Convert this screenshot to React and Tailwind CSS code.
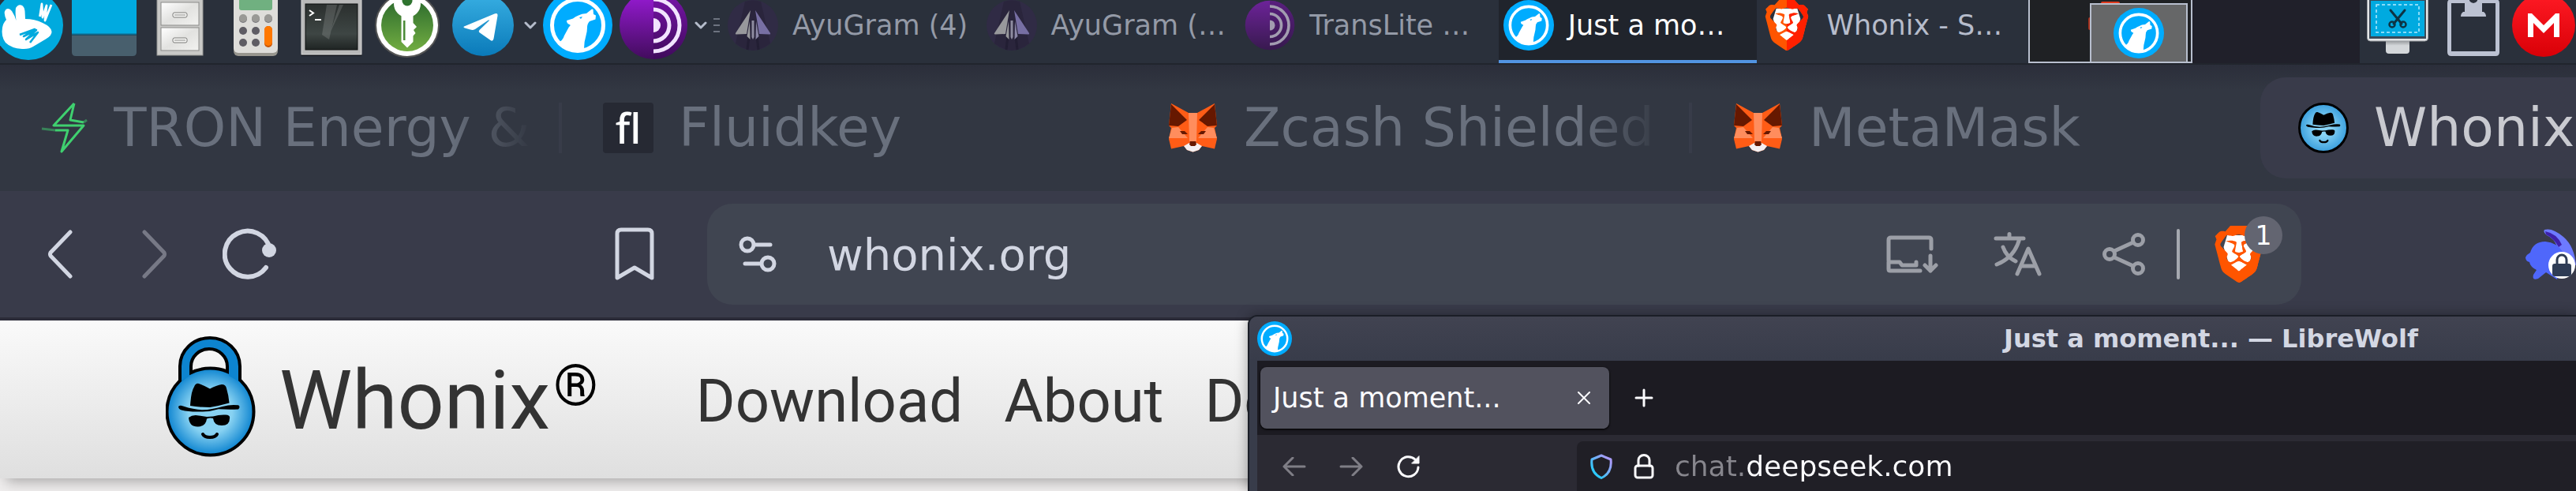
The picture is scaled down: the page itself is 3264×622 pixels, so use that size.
import { SiBrave } from "react-icons/si";

/* ---------- Logos ---------- */

const WolfLogo = ({ className }) => (
  <svg viewBox="0 0 88 88" className={className} aria-hidden="true">
    <circle cx="44" cy="44" r="44" fill="#00acff" />
    <circle cx="44" cy="44" r="32.5" fill="none" stroke="#fff" strokeWidth="5" />
    <path
      d="M30 38 L38 35.5 Q41 33 45 31.5 Q49 29 55 29 L62 23.5 L63.5 24 L64 30 L67 31.5 L66.5 36.5 L59 39 Q56 42 56 47 Q56 52 54.5 57 Q52 65 52 73.5 L50 76 H38 Q25 74 19 65.5 Q25 64 27 57 L33 46 Q36 43.5 33.5 43 Q30 42 30 38 Z"
      fill="#fff"
    />
    <path d="M46 34 L50 33 L48 36 Z" fill="#00acff" />
  </svg>
);

const BraveLogo = ({ className, left = "#ff5500", right = "#ff2000" }) => (
  <svg viewBox="0 0 20 24" className={className} aria-hidden="true">
    <path d="M5 4 H15 L16.5 9 L14 17 L10 20 L6 17 L3.5 9 Z" fill="#fff" />
    <SiBrave x="-2" y="0" size="24" color={left} />
    <SiBrave x="-2" y="0" size="24" color={right} style={{ clipPath: "inset(0 0 0 50%)" }} />
  </svg>
);

const TorLogo = ({ className }) => (
  <svg viewBox="0 0 88 88" className={className} aria-hidden="true">
    <defs>
      <linearGradient id="tor-fill" x1="0" y1="0" x2="0" y2="1">
        <stop offset="0" stopColor="#9a1bd8" />
        <stop offset="1" stopColor="#420c5d" />
      </linearGradient>
    </defs>
    <circle cx="44" cy="44" r="43" fill="url(#tor-fill)" />
    <path d="M44 1 a43 43 0 0 1 0 86 Z" fill="#3d0a58" fillOpacity="0.35" />
    <path d="M44 35 a9 9 0 0 1 0 18 Z" fill="#f2e4ff" />
    <path d="M44 24 a20 20 0 0 1 0 40 M44 11 a33 33 0 0 1 0 66" fill="none" stroke="#f2e4ff" strokeWidth="5" />
  </svg>
);

const AyuLogo = ({ className }) => (
  <svg viewBox="0 0 64 64" className={className} aria-hidden="true">
    <circle cx="32" cy="32" r="32" fill="#302b45" />
    <path d="M22 2 L10 55 Q20 63 32 64 Q44 63 54 55 L42 2 Q32 -1 22 2 Z" fill="#2a253c" />
    <path d="M27 45 L25 63 M37 45 L39 63" stroke="#221e33" strokeWidth="3" />
    <path d="M29 13 L10 42 Q9 44 12 43.5 L24 43 Z" fill="#98989c" />
    <path d="M35 13 L54 42 Q55 44 52 43.5 L40 43 Z" fill="#776fa3" />
    <path d="M28 27 L24.5 46 L28.5 50 Z" fill="#98989c" />
    <path d="M30.5 26 L30.5 47 L32 50 L33.5 47 L33.5 26 Z" fill="#8e8ca0" />
    <path d="M36 27 L39.5 46 L35.5 50 Z" fill="#8a86a6" />
  </svg>
);

const RabbitLogo = () => (
  <svg viewBox="0 0 88 88" className="size-[88px]" aria-hidden="true">
    <circle cx="44" cy="44" r="44" fill="#00aade" />
    <path
      d="M16 37 Q12 28 15 24.5 Q19 21 23 26 Q27 32 28.5 38 Q27 28 28 22 Q31 17 35 18.5 Q39 20 39.5 26 L40 36 Q52 36 62 41 Q73 46 73.5 52 Q74 57 66 61.5 L50 71 Q45 74.5 36 74 Q22 73 15 66 Q9 58 11 47 Q12 41 16 37 Z"
      fill="#fff"
    />
    <path
      d="M58.5 33 L61 17 L62 34 L67 19 L65 38 L73 18"
      fill="none"
      stroke="#fff"
      strokeWidth="2.8"
      strokeLinejoin="round"
    />
    <path
      d="M33 56 L52 49 L38 58 L54 50 L41 62 L56 53 L46 66"
      fill="none"
      stroke="#00aade"
      strokeWidth="2.6"
      strokeLinejoin="round"
    />
  </svg>
);

const DesktopIcon = () => (
  <svg viewBox="0 0 82 96" className="h-24 w-[82px]" aria-hidden="true">
    <rect x="0" y="16" width="82" height="43" fill="#00aae0" />
    <path d="M0 61 H82 V82 Q82 87 77 87 H5 Q0 87 0 82 Z" fill="#485f6d" />
    <path d="M0 59.5 H82" stroke="#116a8c" strokeWidth="2" />
  </svg>
);

const CabinetIcon = () => (
  <svg viewBox="0 0 60 96" className="h-24 w-[60px]" aria-hidden="true">
    <defs>
      <linearGradient id="drawer" x1="0" y1="0" x2="1" y2="1">
        <stop offset="0" stopColor="#fff" />
        <stop offset="0.5" stopColor="#e2e2e0" />
        <stop offset="1" stopColor="#f2f2f0" />
      </linearGradient>
    </defs>
    <rect x="1" y="0" width="58" height="86" fill="#c9c9c7" stroke="#989896" />
    {[19, 51].map((y) => (
      <g key={y}>
        <rect x="6" y={y} width="48" height="29" fill="url(#drawer)" stroke="#8b8b89" />
        <rect x="21" y={y + 13} width="18" height="6" rx="2" fill="#f6f6f4" stroke="#7c7c7a" />
        <path d={`M23 ${y + 16} H37`} stroke="#8b8b89" />
      </g>
    ))}
  </svg>
);

const CalculatorIcon = () => (
  <svg viewBox="0 0 56 96" className="h-24 w-14" aria-hidden="true">
    <rect x="0" y="0" width="56" height="87" rx="6" fill="#98968f" />
    <rect x="0" y="0" width="56" height="83" rx="6" fill="#deddda" />
    <rect x="7" y="8" width="42" height="21" rx="3" fill="#70b080" />
    {[12, 28, 44].map((x) => (
      <g key={x}>
        <circle cx={x} cy="40" r="5" fill="#77767b" />
        <circle cx={x} cy="39" r="5" fill="#9a9996" />
      </g>
    ))}
    {[55, 70].map((y) => (
      <g key={y}>
        <circle cx="12" cy={y} r="5" fill="#5e5c64" />
        <circle cx="28" cy={y} r="5" fill="#5e5c64" />
      </g>
    ))}
    <rect x="39" y="49" width="10" height="27" rx="5" fill="#c75300" />
    <rect x="39" y="49" width="10" height="25" rx="5" fill="#ff7800" />
  </svg>
);

const TerminalIcon = () => (
  <svg viewBox="0 0 78 96" className="h-24 w-[78px]" aria-hidden="true">
    <defs>
      <linearGradient id="term-screen" x1="0" y1="0" x2="0" y2="1">
        <stop offset="0" stopColor="#2b2f2e" />
        <stop offset="0.65" stopColor="#3e4644" />
        <stop offset="1" stopColor="#1f2423" />
      </linearGradient>
    </defs>
    <rect x="0" y="83" width="78" height="4" rx="2" fill="#12151b" />
    <rect x="1" y="8" width="76" height="77" fill="#b9b9b9" stroke="#dadada" />
    <rect x="6" y="21" width="66" height="58" fill="url(#term-screen)" stroke="#0f1111" />
    <path d="M33 22 H46 L36 66 L27 60 Z M54 22 L38 56 L41 46 L49 22 Z" fill="#fff" fillOpacity="0.14" />
    <path d="M11 29 L16 32.5 L11 36" fill="none" stroke="#fff" strokeWidth="2" />
    <path d="M18 41 H26" stroke="#fff" strokeWidth="2" />
  </svg>
);

const KeyIcon = () => (
  <svg viewBox="0 0 82 82" className="size-[82px]" aria-hidden="true">
    <defs>
      <linearGradient id="key-fill" x1="0" y1="0" x2="0" y2="1">
        <stop offset="0" stopColor="#2c6b2d" />
        <stop offset="1" stopColor="#72ad42" />
      </linearGradient>
    </defs>
    <circle cx="41" cy="41" r="41" fill="#545454" />
    <circle cx="41" cy="41" r="39" fill="#fff" />
    <circle cx="41" cy="41" r="33" fill="url(#key-fill)" />
    <circle cx="41" cy="14" r="17" fill="#fff" />
    <circle cx="41" cy="10" r="6.5" fill="#2f742f" />
    <path d="M33.5 29 H48.5 V38 L53 43 L49 47 L51.5 51 L48.5 54.5 V62 L41 69.5 L33.5 62 Z" fill="#fff" />
    <rect x="36" y="35" width="2.5" height="25" fill="#4b8b37" />
  </svg>
);

const TelegramIcon = () => (
  <svg viewBox="0 0 78 78" className="size-[78px]" aria-hidden="true">
    <defs>
      <linearGradient id="tg-fill" x1="0" y1="0" x2="0" y2="1">
        <stop offset="0" stopColor="#37aee2" />
        <stop offset="1" stopColor="#0a7ab9" />
      </linearGradient>
    </defs>
    <circle cx="39" cy="39" r="39" fill="url(#tg-fill)" />
    <path
      d="M15 40.5 L53.5 24.5 Q58 23 57.5 27 L52.5 56 Q51.5 60 48.5 58 L35 48.5 Q32.5 47 35 44.5 L46.5 33.5 Q48 31.5 45 33 L29 44 Q26 45.5 23 44.5 L16 42.5 Q13.5 41.5 15 40.5 Z"
      fill="#fff"
    />
  </svg>
);

const MonitorCutIcon = () => (
  <svg viewBox="0 0 78 96" className="h-24 w-[78px]" aria-hidden="true">
    <defs>
      <linearGradient id="stand" x1="0" y1="0" x2="0" y2="1">
        <stop offset="0" stopColor="#8f9295" />
        <stop offset="0.4" stopColor="#d4d7da" />
      </linearGradient>
    </defs>
    <path d="M24 67 H54 V80 Q54 84 50 84 H28 Q24 84 24 80 Z" fill="url(#stand)" />
    <rect x="0.5" y="8" width="77" height="60" rx="4" fill="#e4e6e8" stroke="#9b9fa3" />
    <rect x="3" y="12" width="72" height="53" fill="#3a4a58" />
    <rect x="5" y="17" width="68" height="45" fill="#00aae0" />
    <rect x="12" y="22" width="54" height="35" fill="none" stroke="#b5ecff" strokeWidth="1.5" strokeDasharray="4 3" />
    <path d="M30 29 L44 46 M48 29 L34 46" stroke="#0d3444" strokeWidth="3" strokeLinecap="round" />
    <circle cx="32" cy="47" r="3.5" fill="none" stroke="#0d3444" strokeWidth="2.5" />
    <circle cx="46" cy="47" r="3.5" fill="none" stroke="#0d3444" strokeWidth="2.5" />
  </svg>
);

const ClipboardIcon = () => (
  <svg viewBox="0 0 66 96" className="h-24 w-[66px]" aria-hidden="true">
    <path
      fillRule="evenodd"
      d="M5 15 H61 Q66 15 66 20 V82 Q66 87 61 87 H5 Q0 87 0 82 V20 Q0 15 5 15 Z M5 20 V81 H61 V20 Z"
      fill="#bcc2d2"
    />
    <path d="M22 14 H27 Q29 20 33 20 Q37 20 39 14 H44 V31 H46 Q49 33 49 37 H17 Q17 33 20 31 H22 Z" fill="#bcc2d2" />
    <path d="M28 10 H38 V17 Q36 20 33 20 Q30 20 28 17 Z" fill="#2a303b" />
  </svg>
);

const MegaIcon = () => (
  <svg viewBox="0 0 80 80" className="size-20" aria-hidden="true">
    <defs>
      <linearGradient id="mega-fill" x1="0" y1="0" x2="0" y2="1">
        <stop offset="0" stopColor="#ff1a24" />
        <stop offset="1" stopColor="#d90007" />
      </linearGradient>
    </defs>
    <circle cx="40" cy="40" r="40" fill="url(#mega-fill)" />
    <path d="M20 55 V25 H25 L40 40 L55 25 H60 V55 H53 V37 L40 50 L27 37 V55 Z" fill="#fff" />
  </svg>
);

/* ---------- Tab favicons ---------- */

const BoltIcon = () => (
  <svg viewBox="0 0 64 64" className="size-16 shrink-0" aria-hidden="true">
    <path
      d="M46 1 L20 29 H58 L30 62 L38 35 H22 M46 1 L41 22 L58 25"
      fill="none"
      stroke="#3fd06f"
      strokeWidth="3"
      strokeLinejoin="round"
    />
    <path d="M5 33 L22 35 M58 25 L62 22" fill="none" stroke="#3fd06f" strokeOpacity="0.5" strokeWidth="3" />
  </svg>
);

const FluidkeyIcon = () => (
  <span className="grid size-16 shrink-0 place-items-center rounded-sm bg-[#262933] font-['Noto_Sans',sans-serif] text-[52px] leading-none font-medium text-white">
    fl
  </span>
);

const FoxIcon = () => (
  <svg viewBox="-1 -1 64 64" className="size-16 shrink-0" aria-hidden="true">
    <path
      d="M3 0 L25 12 H36 L58 0 L61 28 L58 31 L61 45 L58 57.5 L42 54 L38 59 L30.5 61.5 L23 59 L19 54 L3 57.5 L0 45 L3 31 L0 28 Z"
      fill="#ff5c16"
    />
    <path d="M3 1 L23 21 L12 29 L0 28 Z M58 1 L38 21 L49 29 L61 28 Z" fill="#661800" />
    <path d="M25 12 H36 L35 48 H26 Z" fill="#ff8d5d" />
    <path d="M0 44 L4 31 L12 30 L24 44 Z M61 44 L57 31 L49 30 L37 44 Z" fill="#ff8d5d" />
    <path d="M14 35 L20 35 L24 39 L17 39 Z M47 35 L41 35 L37 39 L44 39 Z" fill="#661800" />
    <path d="M19 54 L26 50 H35 L42 54 L38 59 L30.5 61.5 L23 59 Z" fill="#f4f0f2" />
    <path d="M27 48 H34 L35 52 L33 54 H28 L26 52 Z" fill="#661800" />
  </svg>
);

const Disguise = () => (
  <g>
    <path d="M31 88 Q32 70 36 64 Q38 59 42 60 Q48 62 56 66.5 Q64 62 71 61 Q76 61 77 66 Q80 76 80.5 84.5 Q68 88 56 90 Q42 90 31 88 Z" />
    <path d="M16 89 Q18 87 22 88.5 Q36 93 47 93.3 Q58 93 72 89 Q82 86 92 87.3 Q95 89 92 92.5 Q80 93 67 92.3 Q55 96 44 95.5 Q30 96 20 93.5 Q16 92 16 89 Z" />
    <path d="M29 103 Q34 99 42 100.5 L52 102 Q56 101.5 60 101.5 Q68 99 76 99.5 Q82 100 81 104 Q81 113 71 113 Q61 113 60 104 Q56 103 52 104.5 Q51 114 41 114.5 Q30 115 29 103 Z" />
    <path d="M47 124 Q49 128 56 128 Q63 128 65 124" fill="none" stroke="#000" strokeWidth="4" strokeLinecap="round" />
  </g>
);

const WhonixFavicon = () => (
  <svg viewBox="0 0 64 64" className="size-16 shrink-0" aria-hidden="true">
    <defs>
      <radialGradient id="fav-face">
        <stop offset="0.3" stopColor="#8ad4f5" />
        <stop offset="1" stopColor="#3a9fdd" />
      </radialGradient>
    </defs>
    <circle cx="32" cy="32" r="30.5" fill="url(#fav-face)" stroke="#000" strokeWidth="3" />
    <g transform="translate(1 -21.5) scale(0.56)">
      <Disguise />
    </g>
  </svg>
);

const WhonixLogo = () => (
  <svg viewBox="0 0 114 153" className="h-[153px] w-[114px] shrink-0" aria-hidden="true">
    <defs>
      <radialGradient id="logo-face">
        <stop offset="0.5" stopColor="#88d2f2" />
        <stop offset="1" stopColor="#0d84d0" />
      </radialGradient>
    </defs>
    <path d="M18 70 V38 A38 36 0 0 1 94 38 V70 L78 62 V38 A22 21 0 0 0 32 38 V62 Z" fill="#0d84d0" stroke="#000" strokeWidth="4" />
    <circle cx="56.5" cy="95.5" r="55" fill="url(#logo-face)" stroke="#000" strokeWidth="4" />
    <path d="M20 57 V42 H30 V50 Z M92 57 V42 H80 V50 Z" fill="#0d84d0" />
    <Disguise />
  </svg>
);

/* ---------- Line icons ---------- */

const Stroke = ({ viewBox, className, width = 5, children }) => (
  <svg
    viewBox={viewBox}
    className={className}
    fill="none"
    stroke="currentColor"
    strokeWidth={width}
    strokeLinecap="round"
    strokeLinejoin="round"
    aria-hidden="true"
  >
    {children}
  </svg>
);

const ChevronDown = () => (
  <Stroke viewBox="0 0 16 10" className="h-2.5 w-4 text-[#b5bccb]" width={3}>
    <path d="M2 2 L8 8 L14 2" />
  </Stroke>
);

/* ---------- Data ---------- */

const tasks = [
  { label: "AyuGram (4)", icon: <AyuLogo className="size-16 shrink-0" /> },
  { label: "AyuGram (…", icon: <AyuLogo className="size-16 shrink-0" /> },
  { label: "TransLite …", icon: <TorLogo className="size-16 shrink-0 opacity-60" /> },
  { label: "Just a mo…", icon: <WolfLogo className="size-16 shrink-0" />, active: true },
  { label: "Whonix - S…", icon: <BraveLogo className="size-16 shrink-0" />, lit: true },
];

const tabs = [
  { title: "TRON Energy &", icon: <BoltIcon />, separator: true },
  { title: "Fluidkey", icon: <FluidkeyIcon /> },
  { title: "Zcash Shielded", icon: <FoxIcon />, separator: true },
  { title: "MetaMask", icon: <FoxIcon /> },
  { title: "Whonix", icon: <WhonixFavicon />, active: true },
];

const launchers = [
  { label: "Menu", icon: <RabbitLogo /> },
  { label: "Show desktop", icon: <DesktopIcon /> },
  { label: "Files", icon: <CabinetIcon /> },
  { label: "Calculator", icon: <CalculatorIcon /> },
  { label: "Terminal", icon: <TerminalIcon /> },
  { label: "Passwords", icon: <KeyIcon /> },
  { label: "Telegram", icon: <TelegramIcon /> },
];

/* ---------- Sections ---------- */

const PanelButton = ({ label, children }) => (
  <button aria-label={label} className="flex w-24 shrink-0 items-center justify-center">
    {children}
  </button>
);

const Panel = () => (
  <header className="h-[82px] shrink-0 overflow-hidden border-b-2 border-[#21252d] bg-[#2a303b]">
    <div className="-mt-4 flex h-24">
      <div className="-ml-3 flex">
        {launchers.map((item) => (
          <PanelButton key={item.label} label={item.label}>
            {item.icon}
          </PanelButton>
        ))}
        <button aria-label="More chat apps" className="flex w-6 items-center justify-center">
          <ChevronDown />
        </button>
        <PanelButton label="LibreWolf">
          <WolfLogo className="size-[88px]" />
        </PanelButton>
        <PanelButton label="Tor Browser">
          <TorLogo className="size-[88px]" />
        </PanelButton>
        <button aria-label="More browsers" className="flex w-6 items-center justify-center">
          <ChevronDown />
        </button>
        <div className="flex w-4 flex-col items-center justify-center gap-1.5">
          <span className="h-0.5 w-2 bg-[#6d7380]" />
          <span className="h-0.5 w-2 bg-[#6d7380]" />
          <span className="h-0.5 w-2 bg-[#6d7380]" />
        </div>
      </div>

      <nav className="mr-4 grid flex-1 grid-cols-5">
        {tasks.map((task, index) => (
          <button
            key={index}
            className={`flex items-center gap-[18px] overflow-hidden border-b-4 pt-1 pl-1.5 text-left text-[35px] whitespace-nowrap ${
              task.active
                ? "border-[#5294e2] bg-[#20242c] text-white"
                : task.lit
                  ? "border-transparent text-[#b6bccb]"
                  : "border-transparent text-[#949aa7]"
            }`}
          >
            {task.icon}
            {task.label}
          </button>
        ))}
      </nav>

      {/* Workspaces */}
      <button aria-label="Workspace 1" className="flex w-52 justify-end border-2 border-[#b8bfce] bg-[#1f2124] pt-[18px] pr-1">
        <span className="relative flex h-[76px] w-[124px] items-center justify-center border-2 border-[#b8bfce] bg-[#666768]">
          <span className="absolute -top-1 left-3 h-0.5 w-6 rounded-t-full bg-[#e03a1c]" />
          <span className="absolute top-4 -left-1 h-4 w-0.5 rounded-l-full bg-[#a5301c]" />
          <WolfLogo className="size-16" />
        </span>
      </button>
      <button aria-label="Workspace 2" className="w-[212px] bg-[#20202a]" />

      {/* Tray */}
      <PanelButton label="Screenshot">
        <MonitorCutIcon />
      </PanelButton>
      <PanelButton label="Clipboard">
        <ClipboardIcon />
      </PanelButton>
      <button aria-label="MEGA" className="flex w-[82px] items-center justify-center">
        <MegaIcon />
      </button>
    </div>
  </header>
);

const TabStrip = () => (
  <div className="flex h-40 shrink-0 items-center overflow-hidden bg-[#323742] bg-linear-to-b from-[#2b2e3a] to-[#323742] to-20% text-[68px] leading-none">
    {tabs.map((tab) => (
      <button
        key={tab.title}
        className={`flex h-32 w-[716px] shrink-0 items-center gap-8 rounded-[32px] pr-1 pl-12 text-left ${
          tab.active ? "bg-[#393b4a] text-[#c9cad0]" : "text-[#69707d]"
        }`}
      >
        {tab.icon}
        <span className="min-w-0 flex-1 overflow-hidden mask-r-from-80% mask-r-to-100% py-4 whitespace-nowrap">{tab.title}</span>
        <span className={`h-16 w-1 ${tab.separator ? "bg-[#383c49]" : ""}`} />
      </button>
    ))}
  </div>
);

const Toolbar = () => (
  <div className="flex h-[164px] shrink-0 items-center overflow-hidden border-b-4 border-[#2c2c39] bg-[#393b4a] pl-4 text-[#d2d6e2]">
    <button aria-label="Back" className="flex w-30 shrink-0 justify-center">
      <Stroke viewBox="0 0 32 64" className="h-16 w-8">
        <path d="M29 4 L4 30 Q3 32 4 34 L29 60" />
      </Stroke>
    </button>
    <button aria-label="Forward" className="flex w-30 shrink-0 justify-center text-[#777986]">
      <Stroke viewBox="0 0 32 64" className="h-16 w-8">
        <path d="M3 4 L28 30 Q29 32 28 34 L3 60" />
      </Stroke>
    </button>
    <button aria-label="Reload" className="flex w-30 shrink-0 justify-center">
      <Stroke viewBox="0 0 68 68" className="size-[68px]" width={6}>
        <path d="M55 51 A29 29 0 1 1 60 27" />
        <circle cx="59" cy="29" r="9" fill="currentColor" stroke="none" />
      </Stroke>
    </button>
    <button aria-label="Bookmark this page" className="ml-[368px] flex w-30 shrink-0 justify-center">
      <Stroke viewBox="0 0 50 68" className="h-[68px] w-[50px]">
        <path d="M3 64 V8 Q3 3 8 3 H42 Q47 3 47 8 V64 L25 51 Z" />
      </Stroke>
    </button>

    <div className="ml-8 flex h-32 min-w-0 flex-1 items-center rounded-[32px] bg-[#404551] pr-12 pl-10">
      <button aria-label="Site settings" className="mr-16 shrink-0">
        <Stroke viewBox="0 0 48 48" className="size-12">
          <circle cx="11" cy="12" r="8" />
          <path d="M20 12 H40" />
          <circle cx="37" cy="36" r="8" />
          <path d="M8 36 H28" />
        </Stroke>
      </button>
      <input
        type="text"
        aria-label="Address"
        defaultValue="whonix.org"
        className="min-w-0 flex-1 bg-transparent text-[56px] leading-none outline-none"
      />
      <div className="flex shrink-0 items-center text-[#9c9fa7]">
        <button aria-label="Install app" className="flex w-[134px] justify-center">
          <Stroke viewBox="0 0 66 48" className="h-12 w-[66px]">
            <path d="M3 32 V6 Q3 3 6 3 H54 Q57 3 57 6 V17 M43 45 H5 Q3 45 3 43 V34 H17 L20 38 H38 V34" />
            <path d="M56 26 V45 M49 38 L56 45 L63 38" />
          </Stroke>
        </button>
        <button aria-label="Translate" className="flex w-[134px] justify-center">
          <Stroke viewBox="0 0 62 56" className="h-14 w-[62px]">
            <path d="M20 2.5 V8 M3 8 H38 M33 8 Q27 32 4 41 M12 19 Q16 31 28 37" />
            <path d="M30 53 L44 21 L58 53 M35 43 H53" />
          </Stroke>
        </button>
        <button aria-label="Share" className="flex w-[134px] justify-center">
          <Stroke viewBox="0 0 56 56" className="size-14">
            <circle cx="10" cy="28" r="6.5" />
            <circle cx="46" cy="10" r="6.5" />
            <circle cx="46" cy="46" r="6.5" />
            <path d="M16 24 L40 13 M16 32 L40 43" />
          </Stroke>
        </button>
      </div>
      <span className="mr-11 h-16 w-1 shrink-0 rounded-full bg-[#a6a9b0]" />
      <button aria-label="Shields" className="relative shrink-0">
        <BraveLogo className="h-[72px] w-[62px]" right="#ff5500" />
        <span className="absolute -top-3 -right-6 grid size-12 place-items-center rounded-full bg-[#636571] text-[33px] leading-none text-white">
          1
        </span>
      </button>
    </div>

    <button aria-label="Wallet extension" className="ml-[284px] w-16 shrink-0">
      <svg viewBox="0 0 64 64" className="size-16" aria-hidden="true">
        <path d="M24 1 Q34 -2 48 10 Q62 22 64 46 L50 40 Q46 32 40 22 Q36 12 27 8 Q22 4 24 1 Z" fill="#6d7aff" />
        <path d="M25 3 Q40 6 46 20 L42 23 Q36 12 26 7 Z" fill="#3e20a8" />
        <path d="M0 36 Q2 32 6 30 Q10 16 25 16 Q40 17 48 30 L40 64 L26 55 L16 63 Q8 66 10 58 L14 52 Q6 48 5 42 Q0 41 0 36 Z" fill="#4f67fb" />
        <circle cx="46" cy="46" r="17" fill="#fff" />
        <rect x="34" y="44" width="24" height="16" rx="3" fill="#2f3c55" />
        <path d="M40 44 V39 A6 6 0 0 1 52 39 V44" fill="none" stroke="#2f3c55" strokeWidth="3" />
      </svg>
    </button>
  </div>
);

const WhonixPage = () => (
  <main className="flex-1 overflow-hidden bg-[#efeded] font-['Roboto',sans-serif] text-[#333]">
    <div className="flex h-[200px] items-center bg-linear-to-b from-[#fafafa] to-[#dfdfdf] pl-[210px] whitespace-nowrap shadow-[8px_4px_16px_rgba(0,0,0,0.3)]">
      <a href="#home" className="flex shrink-0 items-center gap-[30px]">
        <span className="pb-2">
          <WhonixLogo />
        </span>
        <span className="flex items-start pt-1 text-[104px] leading-[122px]">
          Whonix
          <span className="ml-1 text-[72px] leading-[84px] text-black">®</span>
        </span>
      </a>
      <nav className="ml-[124px] flex gap-[52px] pt-1 text-[76px] leading-[89px]">
        <a href="#download">Download</a>
        <a href="#about">About</a>
        <a href="#docs">Docs</a>
      </nav>
    </div>
  </main>
);

const LibreWolfWindow = () => (
  <section className="absolute top-[399px] right-0 bottom-0 left-[1581px] flex flex-col overflow-hidden rounded-tl-xl border-t-2 border-l-2 border-[#1b1e27] bg-[#383c4a] pl-2.5 shadow-[0_0_16px_rgba(0,0,0,0.35)]">
    <div className="-ml-2.5 flex h-14 shrink-0 items-center bg-linear-to-b from-[#414351] to-[#383c4a] pl-2.5 text-[32px] font-bold text-[#d3d7e3]">
      <WolfLogo className="size-11 shrink-0" />
      <h1 className="ml-[902px] whitespace-nowrap">Just a moment... — LibreWolf</h1>
    </div>
    <div className="flex h-[94px] shrink-0 items-center bg-[#1c1b22] pl-1 text-[#fbfbfe]">
      <div className="flex h-[78px] w-[442px] items-center justify-between rounded-lg bg-[#52525e] pr-6 pl-4 shadow-sm shadow-black">
        <button className="text-[35px] whitespace-nowrap">Just a moment...</button>
        <button aria-label="Close tab">
          <Stroke viewBox="0 0 16 16" className="size-4" width={2}>
            <path d="M1 1 L15 15 M15 1 L1 15" />
          </Stroke>
        </button>
      </div>
      <button aria-label="New tab" className="ml-8">
        <Stroke viewBox="0 0 24 24" className="size-6" width={3}>
          <path d="M12 2 V22 M2 12 H22" />
        </Stroke>
      </button>
    </div>
    <div className="flex shrink-0 items-start bg-[#2b2a33] pt-2 pl-8 text-[#7f7e86]">
      <button aria-label="Back" className="mt-5 w-[72px]">
        <Stroke viewBox="0 0 30 24" className="h-6 w-[30px]" width={3}>
          <path d="M28 12 H2 M13 1 L2 12 L13 23" />
        </Stroke>
      </button>
      <button aria-label="Forward" className="mt-5 w-[72px]">
        <Stroke viewBox="0 0 30 24" className="h-6 w-[30px]" width={3}>
          <path d="M2 12 H28 M17 1 L28 12 L17 23" />
        </Stroke>
      </button>
      <button aria-label="Reload" className="mt-4 text-[#fbfbfe]">
        <Stroke viewBox="0 0 32 32" className="size-8" width={3}>
          <path d="M28 17 A12.5 12.5 0 1 1 24 7" />
          <path d="M29 3 V12 H20 Z" fill="currentColor" strokeWidth="1" />
        </Stroke>
      </button>
      <div className="ml-[197px] flex h-20 flex-1 items-start gap-[26px] rounded-tl-lg bg-[#201f26] pt-4 pl-4">
        <svg viewBox="0 0 30 32" className="h-8 w-[30px] shrink-0" aria-hidden="true">
          <defs>
            <linearGradient id="shield" x1="0" y1="1" x2="1" y2="0">
              <stop offset="0.2" stopColor="#2cc9fb" />
              <stop offset="0.85" stopColor="#a99cf8" />
            </linearGradient>
          </defs>
          <path d="M15 2 L27 7 Q29 24 15 30.5 Q1 24 3 7 Z" fill="none" stroke="url(#shield)" strokeWidth="3" strokeLinejoin="round" />
        </svg>
        <Stroke viewBox="0 0 26 32" className="h-8 w-[26px] shrink-0 text-[#fbfbfe]" width={3}>
          <rect x="2" y="15" width="22" height="15" rx="3" />
          <path d="M6 15 V8 A7 6.5 0 0 1 20 8 V15" />
        </Stroke>
        <input
          type="text"
          aria-label="Search or enter address"
          defaultValue="chat.deepseek.com"
          className="-mt-2 h-12 min-w-0 flex-1 bg-[linear-gradient(to_right,#87868d_90px,#fbfbfe_90px)] bg-clip-text text-[36px] text-transparent outline-none"
        />
      </div>
    </div>
  </section>
);

export default function App() {
  return (
    <div className="relative flex h-screen flex-col overflow-hidden bg-[#2a303b] font-['DejaVu_Sans',sans-serif]">
      <Panel />
      <TabStrip />
      <Toolbar />
      <WhonixPage />
      <LibreWolfWindow />
    </div>
  );
}
